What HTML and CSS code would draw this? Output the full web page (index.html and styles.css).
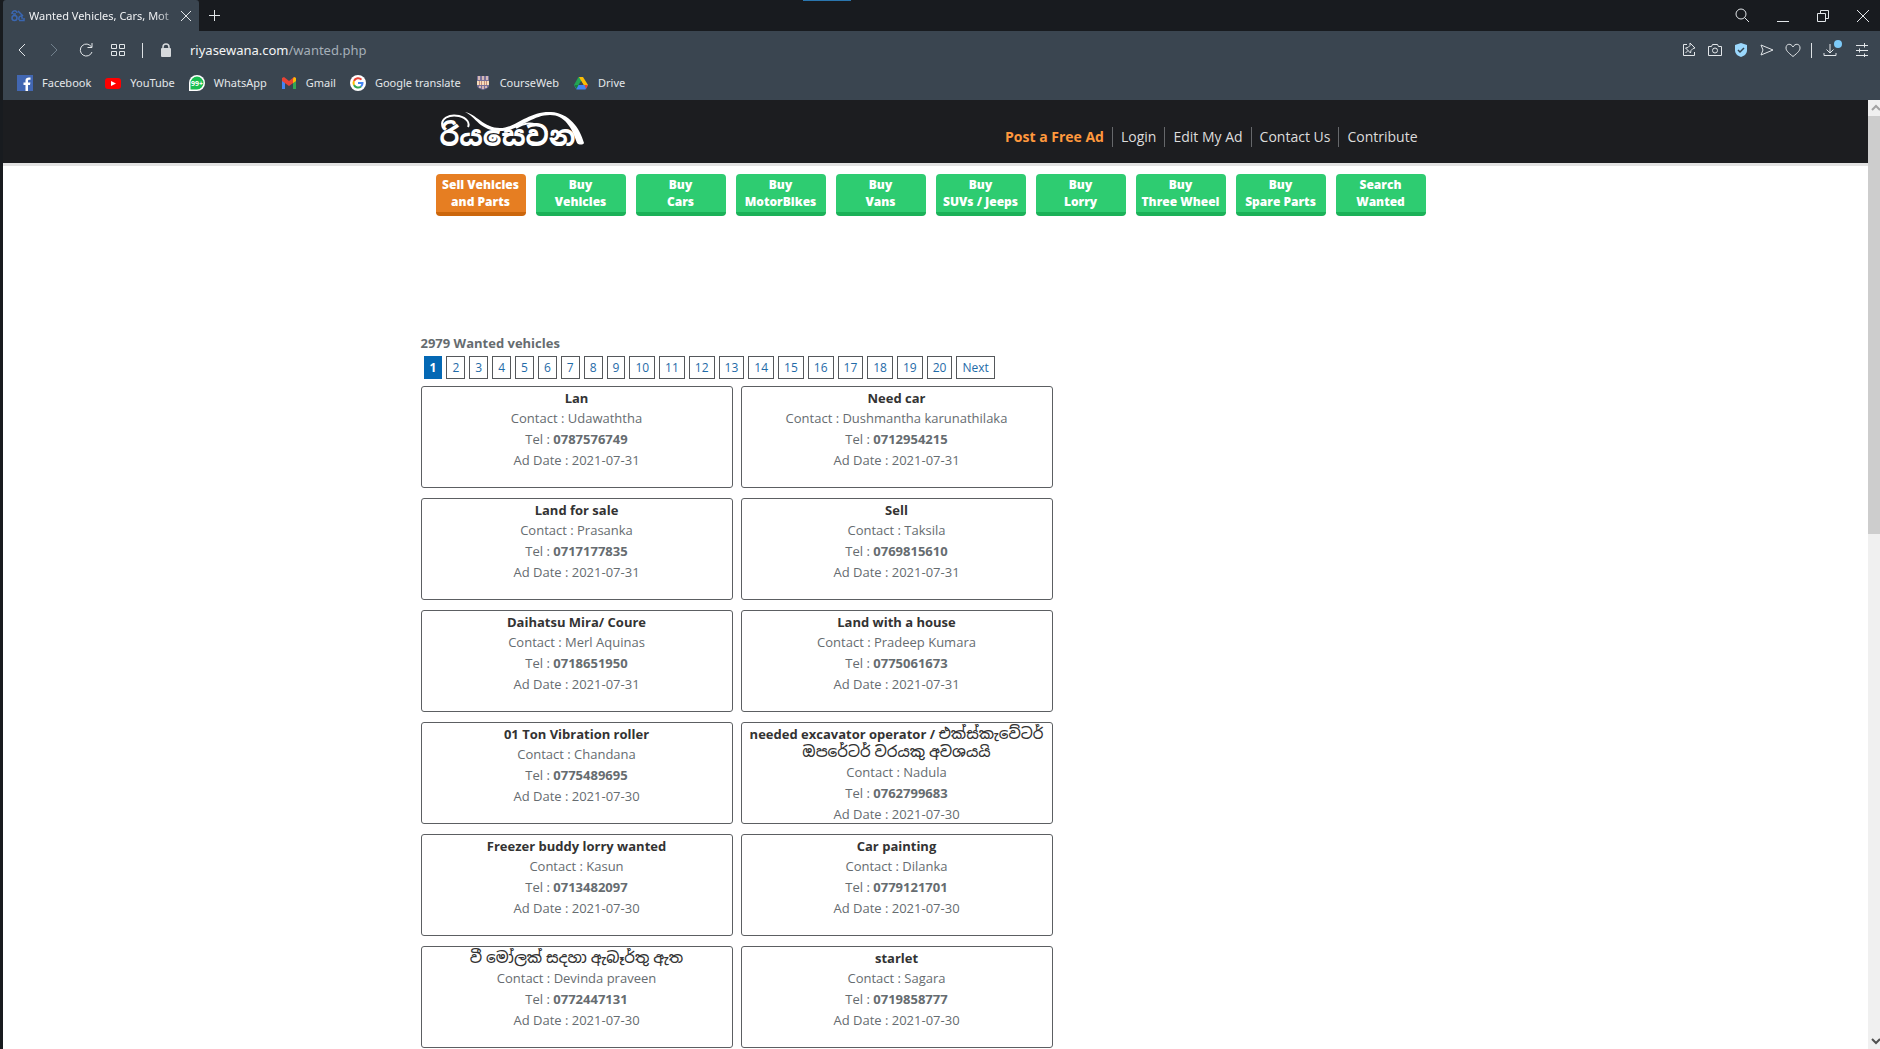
FILE: index.html
```html
<!DOCTYPE html>
<html lang="en">
<head>
<meta charset="utf-8">
<title>Wanted Vehicles, Cars, Motorbikes</title>
<link rel="stylesheet" href="styles.css">
</head>
<body>
<div class="browser">
  <div class="tabbar">
    <div class="tab">
      <svg class="favicon" viewBox="0 0 14 12"><g fill="none" stroke="#3a66b0" stroke-width="1.500"><path d="M1 4C1 0 6 0 6 3"/><circle cx="3.500" cy="8" r="2.500"/><path d="M2 4h3M7 1l5 5M8 10c-1-5 4-5 3-1M8 10.500h5V8"/></g></svg>
      <span class="tab-title">Wanted Vehicles, Cars, Mot</span>
      <button class="icon-button tab-close" aria-label="Close tab"><svg width="10" height="10" viewBox="0 0 10 10"><path d="M0 0l10 10M10 0L0 10"/></svg></button>
    </div>
    <button class="icon-button tab-add" aria-label="New tab"><svg width="11" height="11" viewBox="0 0 11 11"><path d="M5.500 0v11M0 5.500h11"/></svg></button>
    <span class="window-marker"></span>
    <div class="window-buttons">
      <button class="icon-button" aria-label="Search tabs"><svg width="16" height="16" viewBox="0 0 16 16"><circle cx="8" cy="6" r="5"/><path d="M11.500 9.500l4.500 4.500"/></svg></button>
      <button class="icon-button" aria-label="Minimize"><svg width="12" height="16" viewBox="0 0 12 16"><path d="M0 13.500h12"/></svg></button>
      <button class="icon-button" aria-label="Restore"><svg width="12" height="12" viewBox="0 0 12 12"><path d="M.5 3.500h8v8h-8zM3.500 3V.5h8v8H9"/></svg></button>
      <button class="icon-button" aria-label="Close"><svg width="12" height="12" viewBox="0 0 12 12"><path d="M0 0l12 12M12 0L0 12"/></svg></button>
    </div>
  </div>

  <div class="toolbar">
    <button class="icon-button" aria-label="Back"><svg width="16" height="16" viewBox="0 0 16 16"><path d="M11 2L5 8l6 6"/></svg></button>
    <button class="icon-button faded" aria-label="Forward"><svg width="16" height="16" viewBox="0 0 16 16"><path d="M5 2l6 6-6 6"/></svg></button>
    <button class="icon-button" aria-label="Reload"><svg width="16" height="16" viewBox="0 0 16 16"><path d="M14 10A6 6 0 1 1 13.500 5M14 1v4.500H9.500"/></svg></button>
    <button class="icon-button" aria-label="Speed dial"><svg width="16" height="16" viewBox="0 0 16 16"><path d="M1.500 2.500h5v4h-5zM9.500 2.500h5v4h-5zM1.500 9.500h5v4h-5zM9.500 9.500h5v4h-5z"/></svg></button>
    <span class="divider"></span>
    <svg class="lock" width="12" height="14" viewBox="0 0 12 14"><rect x="1" y="5" width="10" height="9" rx="1" fill="#d6d9dc"/><path d="M3 6V4a3 3 0 0 1 6 0v2" fill="none" stroke="#d6d9dc" stroke-width="1.500"/></svg>
    <button class="address" aria-label="Address">riyasewana.com<span class="address-path">/wanted.php</span></button>
    <div class="tools">
      <button class="icon-button" aria-label="Pin page"><svg width="16" height="16" viewBox="0 0 16 16"><path d="M6 2.500H2.500v11h11V10M9 1l5 5-2 .5-2 2-.5 2.500-5-5L7 5.500l2-2zM7 8.500L4.500 11"/></svg></button>
      <button class="icon-button" aria-label="Snapshot"><svg width="16" height="16" viewBox="0 0 16 16"><path d="M1.500 4.500h3l1-2h5l1 2h3v9h-13z"/><circle cx="8" cy="8.500" r="2.500"/></svg></button>
      <button class="icon-button" aria-label="Ad blocker"><svg width="16" height="16" viewBox="0 0 16 16"><path d="M8 1l6 2v5c0 4-3 6-6 7-3-1-6-3-6-7V3z" fill="#9bd8fd" stroke="none"/><path d="M5 8l2 2 4-4" stroke="#34434f" stroke-width="1.500"/></svg></button>
      <button class="icon-button" aria-label="My Flow"><svg width="16" height="16" viewBox="0 0 16 16"><path d="M2 3l12 5-12 5 2-5z"/></svg></button>
      <button class="icon-button" aria-label="Save to bookmarks"><svg width="16" height="16" viewBox="0 0 16 16"><path d="M8 14.500C3 10.500 1 8.500 1 6 1 1.500 6 1 8 5c2-4 7-3.500 7 1 0 2.500-2 4.500-7 8.500z"/></svg></button>
      <span class="divider"></span>
      <button class="icon-button" aria-label="Downloads"><svg width="20" height="20" viewBox="0 0 20 20"><path d="M8 4v9M4.500 9.500L8 13l3.500-3.500M2 13v2.500h12V13"/><circle cx="16" cy="4" r="4" fill="#7dcaf8" stroke="none"/></svg></button>
      <button class="icon-button" aria-label="Easy setup"><svg width="14" height="14" viewBox="0 0 14 14"><path d="M1 2.500h12M1 7.500h12M1 12.500h12M9.500 0v4.500M4.500 5.500v4M9.500 10.500V14"/></svg></button>
    </div>
  </div>

  <nav class="bookmarks" aria-label="Bookmarks">
    <a href="#"><svg width="16" height="16" viewBox="0 0 16 16"><path d="M0 0h16v16H0z" fill="#4267b2"/><path d="M11 16v-6h2l.4-2.500H11V6c0-.8.4-1.200 1.300-1.200h1.200V2.600C11 2.200 8.500 2.500 8.500 5.500v2h-2V10h2v6z" fill="#fff"/></svg>Facebook</a>
    <a href="#"><svg width="16" height="16" viewBox="0 0 16 16"><rect y="3" width="16" height="11" rx="3" fill="#f00"/><path d="M6 6l5 2.500L6 11z" fill="#fff"/></svg>YouTube</a>
    <a href="#"><svg width="16" height="16" viewBox="0 0 16 16"><path d="M0 16V8a8 8 0 1 1 8 8z" fill="#fff"/><path d="M1.500 14.500V8A6.500 6.500 0 1 1 8 14.500z" fill="#19bd50"/><text x="8" y="11" font-size="7" font-weight="700" text-anchor="middle" fill="#fff">99+</text></svg>WhatsApp</a>
    <a href="#"><svg width="16" height="16" viewBox="0 0 16 16"><path d="M1 4h3v10H1z" fill="#4285f4"/><path d="M12 4h3v10h-3z" fill="#34a853"/><path d="M1 3l2-1 5 4 5-4 2 1v3l-7 5-7-5z" fill="#ea4335"/><path d="M12 4l1-2 2 1v3l-3 2z" fill="#fbbc04"/></svg>Gmail</a>
    <a href="#"><svg width="16" height="16" viewBox="0 0 16 16"><circle cx="8" cy="8" r="8" fill="#fff"/><g fill="none" stroke-width="2"><path d="M4 6a4.500 4.500 0 0 1 7.500-1.300" stroke="#ea4335"/><path d="M4 10a4.500 4.500 0 0 1 0-4" stroke="#fbbc05"/><path d="M4 10a4.500 4.500 0 0 0 7 1.500" stroke="#34a853"/><path d="M11 11.500A4.500 4.500 0 0 0 12.500 8H8" stroke="#4285f4"/></g></svg>Google translate</a>
    <a href="#"><svg width="16" height="16" viewBox="0 0 16 16"><path d="M2 1h12v9c0 3-3 4-6 5-3-1-6-2-6-5z" fill="#77709a"/><path d="M3 1h2v4H3zM7 1h2v4H7zM11 1h2v4h-2zM4 11h2v2H4zM7 11h2v3H7zM10 11h2v2h-2z" fill="#d5b8b4"/><path d="M2 6h12v4H2z" fill="#f6dcbc"/><path d="M4.500 6v4M6.500 6v4M9.500 6v4M11.500 6v4" stroke="#c58f7a"/></svg>CourseWeb</a>
    <a href="#"><svg width="16" height="16" viewBox="0 0 16 16"><path d="M5.500 2h2.500l1.500 3-5.500 9-3-4z" fill="#22a455"/><path d="M6 2h4l5 8h-4.500z" fill="#fbbc04"/><path d="M3.500 10H15l-2.500 4.500h-9L1 10z" fill="#4285f4"/><path d="M11.500 10H15l-2 4z" fill="#ea4335"/><path d="M1 10l2.500 4 2-4z" fill="#188038"/><path d="M8 6l2.500 4h-5z" fill="#3a4550"/></svg>Drive</a>
  </nav>
</div>

<div class="viewport">
  <div class="page">
    <header class="site-header">
      <div class="container header-row">
        <a class="logo" href="#" aria-label="Riyasewana">
          <span class="logo-text" lang="si">රියසෙවන</span>
          <svg class="logo-swoosh" width="146" height="38" viewBox="0 0 146 38"><path d="M25 1C36 3 44 17 60 17S88 0 111 1c18 1 29 16 33 31-1 2-5 2-7 0C132 17 125 4 110 4 91 4 80 20 60 20 40 20 36 6 25 1z" fill="#fff"/><path d="M3 17C-1 7 10 3 19 5c8 2 11 7 9 11M76 17c10-7 24-6 31 4" fill="none" stroke="#fff" stroke-width="2"/></svg>
        </a>
        <nav class="site-nav" aria-label="Site">
          <a class="post" href="#">Post a Free Ad</a>
          <a href="#">Login</a>
          <a href="#">Edit My Ad</a>
          <a href="#">Contact Us</a>
          <a href="#">Contribute</a>
        </nav>
      </div>
    </header>

    <nav class="container categories" aria-label="Categories">
      <a class="sell" href="#">Sell Vehicles<br>and Parts</a>
      <a href="#">Buy<br>Vehicles</a>
      <a href="#">Buy<br>Cars</a>
      <a href="#">Buy<br>MotorBikes</a>
      <a href="#">Buy<br>Vans</a>
      <a href="#">Buy<br>SUVs / Jeeps</a>
      <a href="#">Buy<br>Lorry</a>
      <a href="#">Buy<br>Three Wheel</a>
      <a href="#">Buy<br>Spare Parts</a>
      <a href="#">Search<br>Wanted</a>
    </nav>

    <main class="container listing">
      <h1>2979 Wanted vehicles</h1>
      <nav class="pagination" aria-label="Pages">
        <a class="current" href="#">1</a><a href="#">2</a><a href="#">3</a><a href="#">4</a><a href="#">5</a><a href="#">6</a><a href="#">7</a><a href="#">8</a><a href="#">9</a><a href="#">10</a><a href="#">11</a><a href="#">12</a><a href="#">13</a><a href="#">14</a><a href="#">15</a><a href="#">16</a><a href="#">17</a><a href="#">18</a><a href="#">19</a><a href="#">20</a><a href="#">Next</a>
      </nav>
      <div class="ads">
        <article class="ad"><h2>Lan</h2><p>Contact : Udawaththa</p><p>Tel : <b>0787576749</b></p><p>Ad Date : 2021-07-31</p></article>
        <article class="ad"><h2>Need car</h2><p>Contact : Dushmantha karunathilaka</p><p>Tel : <b>0712954215</b></p><p>Ad Date : 2021-07-31</p></article>
        <article class="ad"><h2>Land for sale</h2><p>Contact : Prasanka</p><p>Tel : <b>0717177835</b></p><p>Ad Date : 2021-07-31</p></article>
        <article class="ad"><h2>Sell</h2><p>Contact : Taksila</p><p>Tel : <b>0769815610</b></p><p>Ad Date : 2021-07-31</p></article>
        <article class="ad"><h2>Daihatsu Mira/ Coure</h2><p>Contact : Merl Aquinas</p><p>Tel : <b>0718651950</b></p><p>Ad Date : 2021-07-31</p></article>
        <article class="ad"><h2>Land with a house</h2><p>Contact : Pradeep Kumara</p><p>Tel : <b>0775061673</b></p><p>Ad Date : 2021-07-31</p></article>
        <article class="ad"><h2>01 Ton Vibration roller</h2><p>Contact : Chandana</p><p>Tel : <b>0775489695</b></p><p>Ad Date : 2021-07-30</p></article>
        <article class="ad"><h2>needed excavator operator / <span lang="si">එක්ස්කැවේටර් ඔපරේටර් වරයකු අවශයයි</span></h2><p>Contact : Nadula</p><p>Tel : <b>0762799683</b></p><p>Ad Date : 2021-07-30</p></article>
        <article class="ad"><h2>Freezer buddy lorry wanted</h2><p>Contact : Kasun</p><p>Tel : <b>0713482097</b></p><p>Ad Date : 2021-07-30</p></article>
        <article class="ad"><h2>Car painting</h2><p>Contact : Dilanka</p><p>Tel : <b>0779121701</b></p><p>Ad Date : 2021-07-30</p></article>
        <article class="ad"><h2><span lang="si">වී මෝලක් සදහා ඇබෑර්තු ඇත</span></h2><p>Contact : Devinda praveen</p><p>Tel : <b>0772447131</b></p><p>Ad Date : 2021-07-30</p></article>
        <article class="ad"><h2>starlet</h2><p>Contact : Sagara</p><p>Tel : <b>0719858777</b></p><p>Ad Date : 2021-07-30</p></article>
      </div>
    </main>
  </div>
  <div class="scrollbar" aria-hidden="true">
    <svg width="12" height="16" viewBox="0 0 12 16"><path d="M4 10l4-4 4 4" fill="none" stroke="#a3a3a3" stroke-width="2"/></svg>
    <span class="thumb"></span>
    <svg class="down" width="12" height="16" viewBox="0 0 12 16"><path d="M4 6l4 4 4-4" fill="none" stroke="#505050" stroke-width="2"/></svg>
  </div>
</div>
</body>
</html>
```
FILE: styles.css
```css
* { box-sizing: border-box; }

body {
  margin: 0;
  min-height: 100vh;
  display: flex;
  flex-direction: column;
  padding-left: 3px;
  background: #181b1f;
  font-family: "Open Sans", "Noto Sans", "Noto Sans Sinhala", sans-serif;
  font-size: 13px;
}

a { text-decoration: none; }

/* Browser frame */
.browser {
  color: #f0f2f4;
  font-family: "Noto Sans", "Open Sans", sans-serif;
  font-size: 11px;
}

.icon-button {
  display: flex;
  padding: 0;
  border: 0;
  background: none;
  color: #e2e6e9;
}

.icon-button svg {
  fill: none;
  stroke: currentColor;
}

.faded { color: #71808c; }

.tabbar {
  position: relative;
  display: flex;
  align-items: center;
  height: 31px;
}

.tab {
  display: flex;
  align-items: center;
  width: 196px;
  height: 31px;
  padding: 0 8px;
  gap: 4px;
  border-radius: 3px 3px 0 0;
  background: #3a4550;
}

.favicon { flex: none; width: 14px; height: 12px; }

.tab-title {
  flex: 1;
  white-space: nowrap;
  mask-image: linear-gradient(to right, #000 85%, rgba(0, 0, 0, 0.3));
}

.tab-add { margin-left: 10px; }

.window-marker {
  position: absolute;
  top: 0;
  left: 800px;
  width: 48px;
  height: 1px;
  background: #2a76ae;
}

.window-buttons {
  display: flex;
  align-items: center;
  gap: 28px;
  margin-left: auto;
  padding-right: 11px;
}

.toolbar {
  display: flex;
  align-items: center;
  height: 38px;
  padding: 0 11px;
  gap: 16px;
  background: #3a4550;
}

.divider {
  width: 1px;
  height: 15px;
  background: #dde1e4;
}

.lock { margin-left: 1px; }

.address {
  flex: 1;
  padding: 0 0 0 2px;
  border: 0;
  background: none;
  color: #f4f5f6;
  font: 13px "Noto Sans", "Open Sans", sans-serif;
  text-align: left;
}

.address-path { color: #a5afb8; }

.tools {
  display: flex;
  align-items: center;
  gap: 10px;
}

.tools .icon-button:last-child { margin-left: 3px; }

.bookmarks {
  display: flex;
  align-items: center;
  height: 31px;
  padding: 0 14px 4px;
  gap: 14px;
  background: #3a4550;
}

.bookmarks a {
  display: flex;
  align-items: center;
  gap: 9px;
  color: #e4e7ea;
}

/* Page area beside its scrollbar */
.viewport {
  flex: 1;
  display: flex;
}

.page {
  flex: 1;
  background: #fff;
  color: #666c70;
}

.scrollbar {
  display: flex;
  flex-direction: column;
  width: 12px;
  background: #f0f0f0;
}

.thumb {
  flex: 0 0 44%;
  background: #cdcdcd;
}

.down { margin-top: auto; }

.container {
  max-width: 1032px;
  margin: 0 auto;
}

.site-header {
  border-bottom: 3px solid #e2e2e2;
  background: #1c1d20;
}

.header-row {
  display: flex;
  justify-content: space-between;
  align-items: flex-start;
  height: 63px;
  padding: 11px 26px 0 20px;
}

.logo {
  position: relative;
  width: 146px;
  height: 38px;
  color: #fff;
}

.logo-text {
  display: block;
  padding-top: 11px;
  font-size: 27px;
  font-weight: 800;
  line-height: 28px;
}

.logo-swoosh {
  position: absolute;
  top: 0;
  left: 0;
}

.site-nav {
  display: flex;
  padding-top: 16px;
}

.site-nav a {
  padding: 0 8px;
  border-left: 1px solid #66686b;
  color: #dcdcdc;
  font-size: 14px;
  line-height: 20px;
}

.site-nav .post {
  border-left: 0;
  color: #ff983d;
  font-weight: 700;
}

.categories {
  display: flex;
  gap: 10px;
  padding: 8px 26px 0 16px;
}

.categories a {
  flex: 1 1 0;
  height: 42px;
  padding-top: 2px;
  border-bottom: 4px solid #1bb158;
  border-radius: 4px;
  background: #2ecc71;
  color: #fff;
  font-size: 12px;
  font-weight: 800;
  line-height: 17px;
  text-align: center;
  white-space: nowrap;
}

.categories .sell {
  border-color: #cb660c;
  background: #e67e22;
}

.listing { padding: 118px 1px 0; }

h1 {
  margin: 0;
  font-size: 13px;
  line-height: 18px;
}

.pagination {
  display: flex;
  gap: 4px;
  padding: 4px 3px;
}

.pagination a {
  padding: 0 5px;
  border: 1px solid #55585b;
  color: #1f6ba8;
  font-size: 12px;
  line-height: 21px;
}

.pagination .current {
  border-color: #0468b4;
  background: #0468b4;
  color: #fff;
  font-weight: 700;
}

.ads {
  display: grid;
  grid-template-columns: 312px 312px;
  gap: 10px 8px;
  padding: 3px 0 1px;
}

.ad {
  height: 102px;
  border: 1px solid #5c5f62;
  border-radius: 3px;
  text-align: center;
}

.ad h2 {
  margin: 2px 0 1px;
  color: #333;
  font-size: 13px;
  line-height: 18px;
}

.ad h2 [lang="si"] {
  font-size: 15px;
  font-weight: 500;
  line-height: 14px;
}

.ad p {
  margin: 0;
  line-height: 21px;
}
```
